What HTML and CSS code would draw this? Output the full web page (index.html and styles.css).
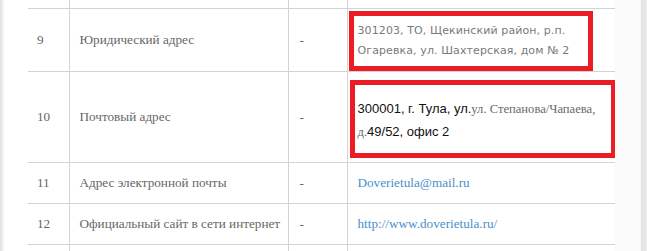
FILE: index.html
```html
<!DOCTYPE html>
<html lang="ru">
<head>
<meta charset="utf-8">
<link rel="stylesheet" href="styles.css">
</head>
<body>
<div class="page">
  <div class="edge-left"></div>
  <div class="content">
    <table class="info">
      <colgroup>
        <col class="c-num"><col class="c-name"><col class="c-dash"><col class="c-val">
      </colgroup>
      <tr class="r-top"><td></td><td></td><td></td><td></td></tr>
      <tr class="r9">
        <td class="num">9</td>
        <td class="name">Юридический адрес</td>
        <td class="dash">-</td>
        <td class="val val-box">
          <div class="mark mark-1">301203, ТО, Щекинский район, р.п. Огаревка, ул. Шахтерская, дом № 2</div>
        </td>
      </tr>
      <tr class="r10">
        <td class="num">10</td>
        <td class="name">Почтовый адрес</td>
        <td class="dash">-</td>
        <td class="val val-box">
          <div class="mark mark-2"><span class="line">300001, г. Тула, ул.<span class="serif-in">ул. Степанова/Чапаева,</span></span><span class="line"><span class="serif-in">д.</span>49/52, офис 2</span></div>
        </td>
      </tr>
      <tr class="r-s">
        <td class="num">11</td>
        <td class="name">Адрес электронной почты</td>
        <td class="dash">-</td>
        <td class="val"><a class="link" href="#">Doverietula@mail.ru</a></td>
      </tr>
      <tr class="r-s">
        <td class="num">12</td>
        <td class="name">Официальный сайт в сети интернет</td>
        <td class="dash">-</td>
        <td class="val"><a class="link" href="#">http://www.doverietula.ru/</a></td>
      </tr>
      <tr class="r-s"><td></td><td></td><td></td><td></td></tr>
    </table>
  </div>
  <div class="gutter-right"></div>
  <div class="edge-right"></div>
</div>
</body>
</html>
```

FILE: styles.css
```css
html, body {
  margin: 0;
  padding: 0;
  background: #ffffff;
  overflow: hidden;
}

.page {
  display: flex;
  width: 647px;
  height: 251px;
  overflow: hidden;
}

.edge-left {
  width: 4px;
  flex: none;
  background: linear-gradient(to right, #dedede, #ececec 50%, #f8f8f8);
}

.content {
  width: 587px;
  flex: none;
  padding-left: 24px;
  background: #ffffff;
}

.gutter-right {
  width: 26px;
  flex: none;
  background: #fbfbfb;
}

.edge-right {
  width: 6px;
  flex: none;
  background: linear-gradient(to right, #e2e2e2, #ebebeb);
}

.info {
  border-collapse: collapse;
  table-layout: fixed;
  width: 587px;
  font-family: "Liberation Serif", "Times New Roman", serif;
  font-size: 13.2px;
  color: #666666;
}

.c-num { width: 41px; }
.c-name { width: 219px; }
.c-dash { width: 59px; }
.c-val { width: 268px; }

.info td {
  border-top: 1px solid #d3d3d3;
  border-bottom: 1px solid #d3d3d3;
  border-left: 1px solid #d3d3d3;
  padding: 0;
  vertical-align: middle;
}

.info td:first-child {
  border-left: none;
}

.info tr:first-child td {
  border-top: none;
}

.r-top td { height: 8px; }
.r-s td { height: 40px; }

.num { padding-left: 9px !important; }
.name { padding-left: 10px !important; }
.dash { padding-left: 11px !important; }
.val { padding-left: 10px !important; }

.val-box {
  padding-left: 0 !important;
  vertical-align: top !important;
}

.mark {
  border: 5px solid #ec1c24;
  box-sizing: border-box;
  background: #ffffff;
}

.mark-1 {
  margin: 2px 0 0 1px;
  width: 244px;
  height: 60px;
  padding: 5px 0 5px 4px;
  font-family: "DejaVu Sans", Verdana, sans-serif;
  font-size: 11px;
  letter-spacing: 0.1px;
  line-height: 20px;
  color: #7a7a7a;
}

.mark-2 {
  margin: 8px 0 4px 2px;
  width: 266px;
  height: 78px;
  padding: 12px 0 10px 3px;
  font-family: "Liberation Sans", Arial, sans-serif;
  font-size: 13px;
  line-height: 23px;
  color: #111111;
}

.line {
  display: block;
  white-space: nowrap;
}

.serif-in {
  font-family: "Liberation Serif", "Times New Roman", serif;
  font-size: 12.6px;
  line-height: 16px;
  color: #6a6a6a;
}

.link {
  color: #4a8fca;
  text-decoration: none;
}
```
